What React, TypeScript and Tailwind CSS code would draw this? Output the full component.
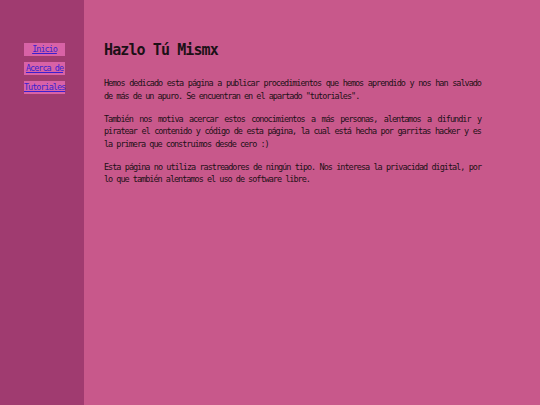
export default function App() {
  const links = ["Inicio", "Acerca de", "Tutoriales"];

  return (
    <div
      className="flex min-h-[405px] w-full text-[#1c1016]"
      style={{ fontFamily: '"DejaVu Sans Mono", "Liberation Mono", monospace' }}
    >
      <nav className="w-[84px] shrink-0 bg-[#a03b70] pt-[43px]">
        <ul className="flex flex-col gap-[6px] pl-[24px]">
          {links.map((l) => (
            <li key={l} className="w-[41px] bg-[#d862a6]">
              <a
                href="#"
                className="block h-[13px] whitespace-nowrap text-center text-[8.5px] leading-[13px] tracking-[-1px] text-[#3a1fd0] underline"
              >
                {l}
              </a>
            </li>
          ))}
        </ul>
      </nav>

      <main className="flex-1 bg-[#c8588b] pl-[20px] pt-[41px]">
        <h1 className="text-[15px] font-bold leading-[18px] tracking-[-0.9px]">Hazlo Tú Mismx</h1>

        <div className="mt-[18px] flex w-[377px] flex-col gap-[10.5px] text-justify text-[8.5px] leading-[12.5px] tracking-[-1px]">
          <p>
            Hemos dedicado esta página a publicar procedimientos que hemos aprendido y nos han salvado de más
            de un apuro. Se encuentran en el apartado "tutoriales".
          </p>
          <p>
            También nos motiva acercar estos conocimientos a más personas, alentamos a difundir y piratear el
            contenido y código de esta página, la cual está hecha por garritas hacker y es la primera que
            construimos desde cero :)
          </p>
          <p>
            Esta página no utiliza rastreadores de ningún tipo. Nos interesa la privacidad digital, por lo que
            también alentamos el uso de software libre.
          </p>
        </div>
      </main>
    </div>
  );
}
